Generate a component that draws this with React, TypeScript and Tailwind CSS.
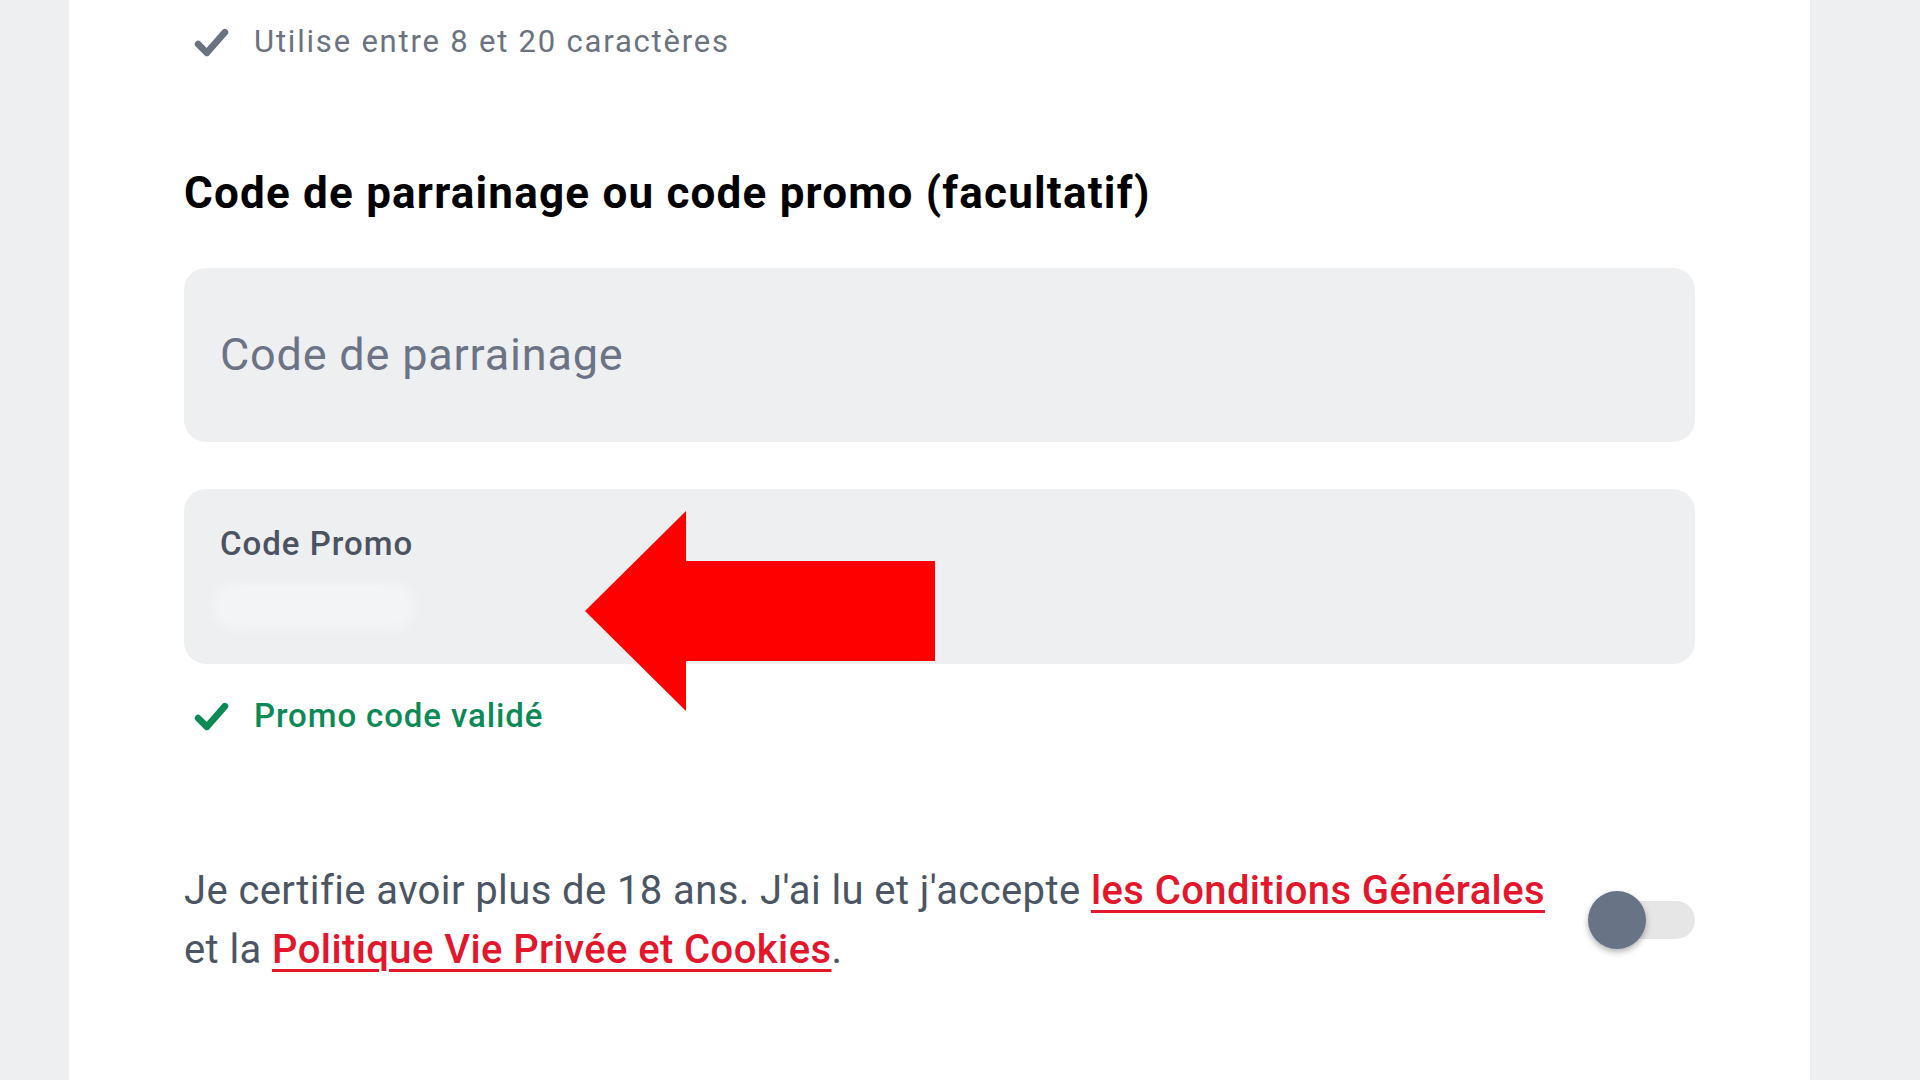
import React from 'react';

const Check = ({ className }: { className: string }) => (
  <svg className={className} viewBox="0 0 36 32" fill="none">
    <path d="M5 17.5 L13.5 26 L31 6" stroke="currentColor" strokeWidth={6.5} strokeLinecap="round" strokeLinejoin="round" />
  </svg>
);

export default function App() {
  return (
    <div className="w-full h-[1080px] bg-[#eeeff1] overflow-hidden font-['Roboto',sans-serif]">
      <div className="ml-[69px] w-[1741px] h-full bg-white px-[115px] pt-[22px]">
        {/* Password rule */}
        <div className="flex items-center gap-[24px] h-[40px] pl-[9px]">
          <Check className="w-[37px] h-[33px] text-[#6b7280]" />
          <span className="text-[31px] tracking-[1.8px] text-[#6b7280] leading-[40px]">Utilise entre 8 et 20 caractères</span>
        </div>

        {/* Heading */}
        <h2 className="mt-[105px] text-[44px] leading-[52px] font-bold text-black tracking-[1.2px]">
          Code de parrainage ou code promo (facultatif)
        </h2>

        {/* Referral input */}
        <div className="mt-[49px] h-[174px] rounded-[22px] bg-[#eeeff1] flex items-center pl-[36px]">
          <span className="text-[45px] tracking-[0.8px] text-[#6b7385]">Code de parrainage</span>
        </div>

        {/* Promo input */}
        <div className="relative mt-[47px] h-[175px] rounded-[22px] bg-[#eeeff1] pl-[36px] pt-[38px]">
          <div className="text-[33px] leading-[34px] tracking-[1px] font-medium text-[#4b5260]">Code Promo</div>
          <div className="mt-[22px] ml-[-6px] w-[200px] h-[46px] rounded-[20px] bg-[#f3f4f5] blur-[6px]" />
          <svg className="absolute left-[401px] top-[22px] w-[350px] h-[200px]" viewBox="0 0 350 200">
            <polygon points="0,100 101,0 101,50 350,50 350,150 101,150 101,200" fill="#ff0000" />
          </svg>
        </div>

        {/* Validated */}
        <div className="mt-[32px] flex items-center gap-[24px] h-[40px] pl-[9px]">
          <Check className="w-[37px] h-[33px] text-[#0b8a55]" />
          <span className="text-[33px] tracking-[0.9px] font-medium text-[#0b8a55] leading-[40px]">Promo code validé</span>
        </div>

        {/* Terms */}
        <div className="mt-[125px] flex items-center justify-between">
          <p className="w-[1390px] text-[40px] tracking-[0.4px] leading-[59px] text-[#4b5563]">
            Je certifie avoir plus de 18 ans. J'ai lu et j'accepte{' '}
            <a className="text-[#e3162b] font-medium underline underline-offset-[6px] decoration-[3px]">les Conditions Générales</a>{' '}
            et la{' '}
            <a className="text-[#e3162b] font-medium underline underline-offset-[6px] decoration-[3px]">Politique Vie Privée et Cookies</a>.
          </p>
          <div className="relative w-[107px] h-[58px] flex items-center">
            <div className="ml-[20px] w-[87px] h-[38px] rounded-full bg-[#e6e6e6]" />
            <div className="absolute left-0 top-0 w-[58px] h-[58px] rounded-full bg-[#687386] shadow-[0_3px_6px_rgba(0,0,0,0.3)]" />
          </div>
        </div>
      </div>
    </div>
  );
}
